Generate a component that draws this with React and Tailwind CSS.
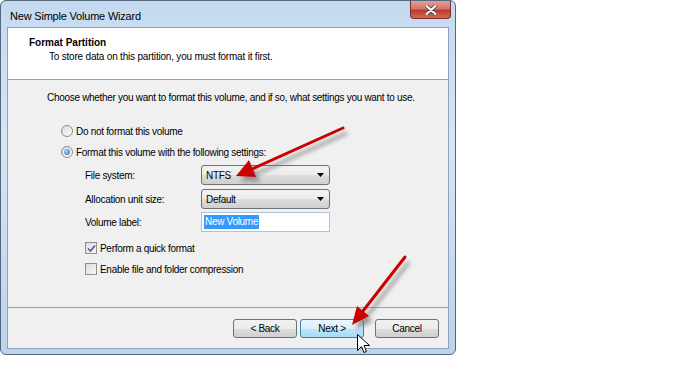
import React from 'react';

const font = "font-['Liberation_Sans',Arial,sans-serif]";

const Radio = ({ checked }) => (
  <span className="w-[12px] h-[12px] rounded-full border border-[#8a8a8a] bg-[linear-gradient(135deg,#d8d8d8,#ffffff)] flex items-center justify-center shrink-0">
    {checked && (
      <span className="w-[6px] h-[6px] rounded-full bg-[radial-gradient(circle_at_35%_35%,#a6d6f5,#1f6fb5)]" />
    )}
  </span>
);

const Checkbox = ({ checked }) => (
  <span className="w-[12px] h-[12px] border border-[#8e8f8f] bg-[linear-gradient(135deg,#dcdcdc,#f8f8f8)] flex items-center justify-center shrink-0">
    {checked && (
      <svg width="9" height="9" viewBox="0 0 9 9">
        <path d="M1 4.5 L3.5 7 L8 1.5" fill="none" stroke="#4a5f97" strokeWidth="1.6" />
      </svg>
    )}
  </span>
);

const Select = ({ value }) => (
  <div className="w-[129px] h-[20px] rounded-[3px] border border-[#707070] bg-[linear-gradient(#f2f2f2_0%,#ebebeb_50%,#dddddd_50%,#cfcfcf_100%)] flex items-center justify-between pl-[4px] pr-[5px]">
    <span className="text-black">{value}</span>
    <svg width="7" height="4" viewBox="0 0 7 4">
      <path d="M0 0 H7 L3.5 4 Z" fill="#000" />
    </svg>
  </div>
);

const Button = ({ label, active }) => (
  <div
    className={`w-[64px] h-[19px] rounded-[3px] border flex items-center justify-center text-[10px] tracking-[-0.3px] text-black ${
      active
        ? 'border-[#3c7fb1] bg-[linear-gradient(#eaf6fd_0%,#d9f0fc_50%,#bee6fd_50%,#a7d9f5_100%)]'
        : 'border-[#707070] bg-[linear-gradient(#f2f2f2_0%,#ebebeb_50%,#dddddd_50%,#cfcfcf_100%)]'
    }`}
  >
    {label}
  </div>
);

export default function App() {
  return (
    <div className={`w-[700px] h-[371px] bg-white relative ${font}`}>
      <div className="w-[456px] h-[355px] rounded-[6px] border border-[#55677d] bg-[linear-gradient(180deg,#c4d9f0_0%,#d6e5f5_40%,#bcd3ec_100%)] flex flex-col">
        {/* title bar */}
        <div className="h-[26px] flex justify-between pl-[9px] pr-[4px]">
          <span className="text-[11px] tracking-[-0.2px] text-black mt-[7px]">New Simple Volume Wizard</span>
          <div className="w-[41px] h-[18px] rounded-b-[4px] border border-t-0 border-[#7a2f27] bg-[linear-gradient(#e3a096_0%,#d0766a_45%,#bf3a2a_55%,#d2665a_100%)] flex items-center justify-center">
            <svg width="12" height="10" viewBox="0 0 12 10">
              <path d="M1.5 1 L10.5 9 M10.5 1 L1.5 9" stroke="#4a4a4a" strokeWidth="3.6" strokeLinecap="round" />
              <path d="M1.5 1 L10.5 9 M10.5 1 L1.5 9" stroke="#ffffff" strokeWidth="2" strokeLinecap="round" />
            </svg>
          </div>
        </div>

        {/* client area */}
        <div className="flex-1 mx-[6px] mb-[5px] border border-[#8da2bb] flex flex-col bg-[#f0f0f0]">
          <div className="h-[52px] bg-white border-b border-[#a0a0a0] pl-[21px] pt-[8px]">
            <div className="text-[10px] font-bold text-black leading-[14px]">Format Partition</div>
            <div className="text-[10px] tracking-[-0.2px] text-black leading-[13px] pl-[20px]">
              To store data on this partition, you must format it first.
            </div>
          </div>

          <div className="flex-1 pl-[39px] text-[10px] tracking-[-0.3px] text-black">
            <div className="h-[16px] mt-[9px] flex items-center whitespace-nowrap">
              Choose whether you want to format this volume, and if so, what settings you want to use.
            </div>
            <div className="ml-[14px] mt-[16px] h-[20px] flex items-center gap-[3px]">
              <Radio />
              <span>Do not format this volume</span>
            </div>
            <div className="ml-[14px] mt-[1px] h-[20px] flex items-center gap-[3px]">
              <Radio checked />
              <span>Format this volume with the following settings:</span>
            </div>
            <div className="ml-[38px] mt-[3px] h-[20px] flex items-center">
              <span className="w-[116px]">File system:</span>
              <Select value="NTFS" />
            </div>
            <div className="ml-[38px] mt-[4px] h-[20px] flex items-center">
              <span className="w-[116px]">Allocation unit size:</span>
              <Select value="Default" />
            </div>
            <div className="ml-[38px] mt-[3px] h-[20px] flex items-center">
              <span className="w-[116px]">Volume label:</span>
              <div className="w-[129px] h-[20px] border border-[#abc3dc] bg-white flex items-center pl-[2px]">
                <span className="bg-[#3399ff] text-white px-[1px] leading-[14px]">New Volume</span>
              </div>
            </div>
            <div className="ml-[38px] mt-[6px] h-[20px] flex items-center gap-[3px]">
              <Checkbox checked />
              <span>Perform a quick format</span>
            </div>
            <div className="ml-[38px] mt-[1px] h-[20px] flex items-center gap-[3px]">
              <Checkbox />
              <span>Enable file and folder compression</span>
            </div>
          </div>

          <div className="h-[41px] border-t border-[#a0a0a0] flex justify-end items-start pt-[11px] pr-[9px]">
            <Button label="< Back" />
            <div className="ml-[3px]">
              <Button label="Next >" active />
            </div>
            <div className="ml-[11px]">
              <Button label="Cancel" />
            </div>
          </div>
        </div>
      </div>

      {/* annotation arrows + cursor */}
      <svg className="absolute inset-0 pointer-events-none" width="700" height="371" viewBox="0 0 700 371">
        <defs>
          <filter id="shadow" x="-20%" y="-20%" width="140%" height="140%">
            <feGaussianBlur stdDeviation="2" />
          </filter>
        </defs>
        <g transform="translate(4 5)" filter="url(#shadow)" opacity="0.7" fill="#777" stroke="#777">
          <line x1="343" y1="128" x2="252" y2="169" strokeWidth="3.5" />
          <polygon points="236,176 256,177 249,160" stroke="none" />
          <line x1="405" y1="257" x2="363" y2="311" strokeWidth="3.5" />
          <polygon points="352,325 369,316 357,306" stroke="none" />
        </g>
        <g fill="#cc0000" stroke="#cc0000">
          <line x1="343" y1="128" x2="252" y2="169" strokeWidth="3" strokeLinecap="round" />
          <polygon points="236,176 256,177 249,160" stroke="none" />
          <line x1="405" y1="257" x2="363" y2="311" strokeWidth="3" strokeLinecap="round" />
          <polygon points="352,325 369,316 357,306" stroke="none" />
        </g>
        <path
          d="M357.5 334.5 L357.5 350.5 L361.5 346.5 L364 352.5 L366.5 351.5 L364 345.5 L369.5 345.5 Z"
          fill="#fff"
          stroke="#000"
          strokeWidth="1"
          strokeLinejoin="round"
        />
      </svg>
    </div>
  );
}
